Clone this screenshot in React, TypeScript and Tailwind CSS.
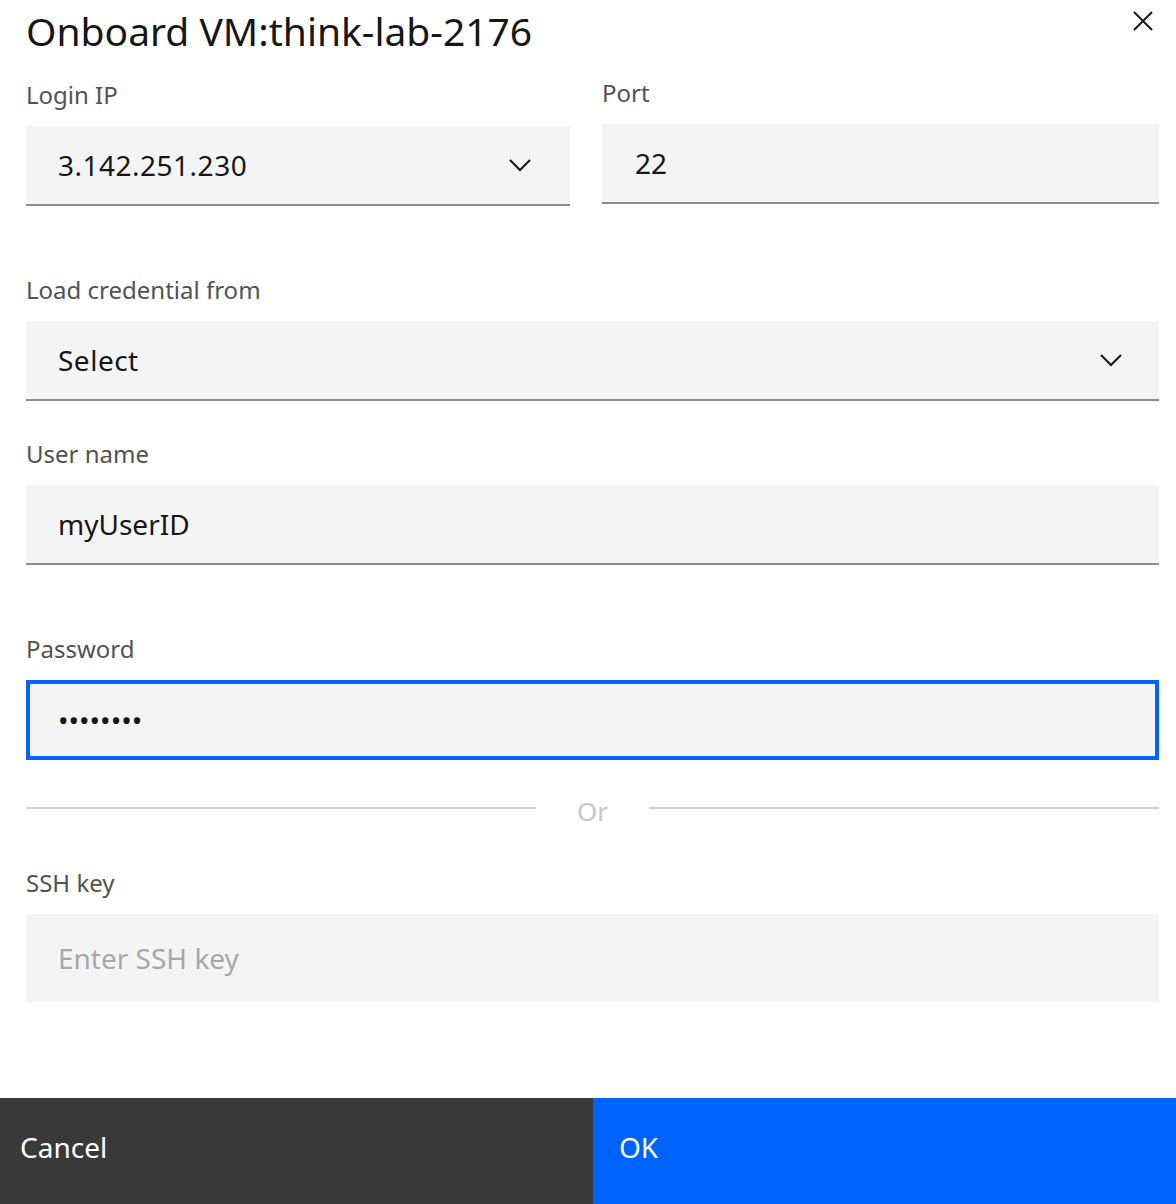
import { useState } from "react";

const font = { fontFamily: '"Noto Sans", "Open Sans", sans-serif' };

function Chevron() {
  return (
    <svg width="24" height="14" viewBox="0 0 24 14" fill="none" className="shrink-0">
      <path d="M2 2 L12 12 L22 2" stroke="#161616" strokeWidth="2" />
    </svg>
  );
}

function Label({ children }: { children: React.ReactNode }) {
  return <div className="text-[24px] leading-[32px] text-[#525252] mb-[15px]">{children}</div>;
}

function SelectBox({ value, chevronRight }: { value: string; chevronRight: string }) {
  return (
    <div className={`h-[80px] bg-[#f4f4f4] border-b-2 border-[#8d8d8d] flex items-center pl-[32px] ${chevronRight}`}>
      <span className="flex-1 text-[28px] text-[#161616] tracking-[0.5px]">{value}</span>
      <Chevron />
    </div>
  );
}

export default function App() {
  const [user, setUser] = useState("myUserID");
  const [pw, setPw] = useState("secret12");
  const [port, setPort] = useState("22");

  return (
    <div style={font} className="relative h-[1204px] w-full bg-white flex flex-col">
      <button className="absolute top-[8px] right-[20px] w-[26px] h-[26px] flex items-center justify-center">
        <svg width="22" height="22" viewBox="0 0 22 22">
          <path d="M2 2 L20 20 M20 2 L2 20" stroke="#161616" strokeWidth="2" />
        </svg>
      </button>

      <div className="pl-[26px] pr-[17px]">
        <h1 className="text-[39px] leading-[48px] pt-[7px] pb-[24px] text-[#161616] font-normal">
          Onboard VM:think-lab-2176
        </h1>

        <div className="flex gap-[32px]">
          <div className="w-[544px]">
            <Label>Login IP</Label>
            <SelectBox value="3.142.251.230" chevronRight="pr-[38px]" />
          </div>
          <div className="flex-1 -mt-[2px]">
            <Label>Port</Label>
            <input
              value={port}
              onChange={(e) => setPort(e.target.value)}
              className="w-full h-[80px] bg-[#f4f4f4] border-b-2 border-[#8d8d8d] pl-[33px] text-[28px] text-[#161616] outline-none"
            />
          </div>
        </div>

        <div className="mt-[68px]">
          <Label>Load credential from</Label>
          <SelectBox value="Select" chevronRight="pr-[36px]" />
        </div>

        <div className="mt-[37px]">
          <Label>User name</Label>
          <input
            value={user}
            onChange={(e) => setUser(e.target.value)}
            className="w-full h-[80px] bg-[#f4f4f4] border-b-2 border-[#8d8d8d] pl-[32px] text-[28px] text-[#161616] outline-none"
          />
        </div>

        <div className="mt-[68px]">
          <Label>Password</Label>
          <input
            type="password"
            value={pw}
            onChange={(e) => setPw(e.target.value)}
            className="w-full h-[80px] bg-[#f4f4f4] border-4 border-[#0062ff] pl-[28px] text-[28px] text-[#161616] outline-none"
          />
        </div>

        <div className="mt-[28px] h-[40px] flex items-center">
          <div className="w-[510px] h-[2px] bg-[#d0d0d0]" />
          <div className="w-[113px] text-center text-[26px] text-[#c6c6c6] pt-[6px]">Or</div>
          <div className="flex-1 h-[2px] bg-[#d0d0d0]" />
        </div>

        <div className="mt-[39px]">
          <Label>SSH key</Label>
          <input
            placeholder="Enter SSH key"
            className="w-full h-[88px] bg-[#f4f4f4] pl-[32px] text-[28px] text-[#161616] placeholder:text-[#a8a8a8] outline-none"
          />
        </div>
      </div>

      <div className="mt-auto flex h-[106px]">
        <button className="w-[593px] bg-[#393939] text-white text-[28px] leading-[32px] text-left pl-[20px] pb-[8px]">
          Cancel
        </button>
        <button className="flex-1 bg-[#0062ff] text-white text-[28px] leading-[32px] text-left pl-[26px] pb-[8px]">
          OK
        </button>
      </div>
    </div>
  );
}
